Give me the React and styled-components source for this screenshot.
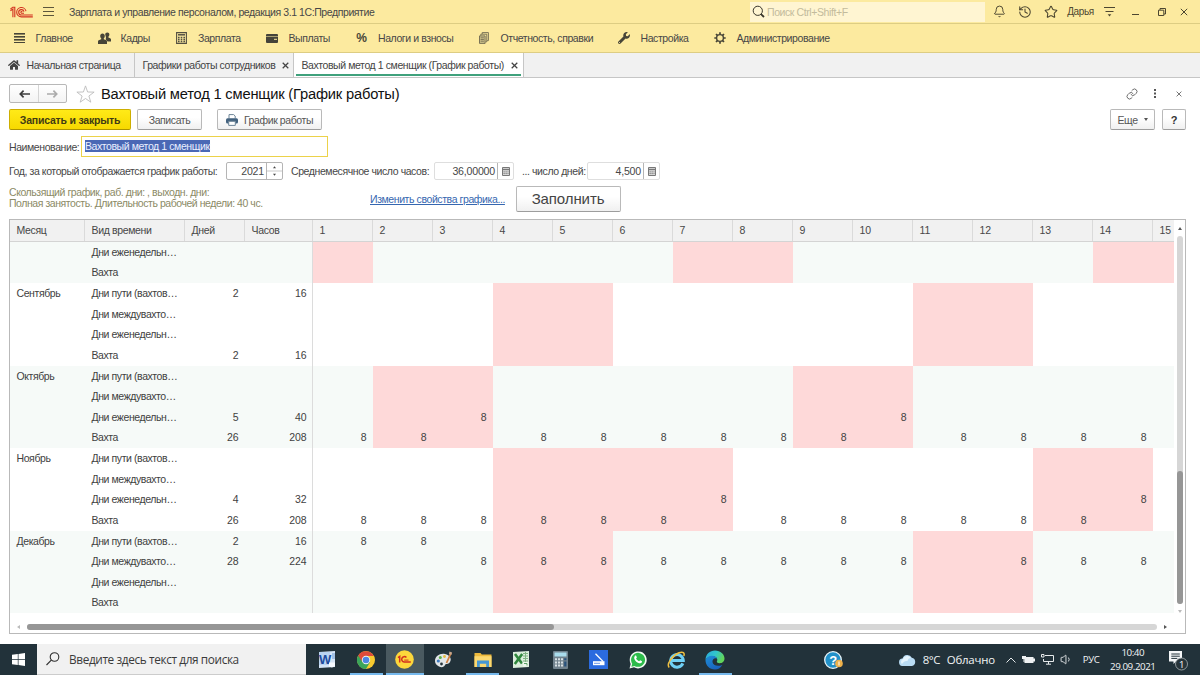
import React from 'react'
import styled, { createGlobalStyle, css } from 'styled-components'
import { Bell, History, Star, Link, Volume1 } from 'lucide-react'
import { FaHome, FaWrench } from 'react-icons/fa'

// themes
const Colors = {
  yellow: '#fcea9f',
  yellowLine: '#ddcd83',
  text: '#474747',
  grey: '#f1f1f1',
  line: '#b9b9b9',
  pink: '#fed9d9',
  stripe: '#f6faf8',
  red: '#d2311f',
  green: '#3fa17c',
  taskbar: '#22323a',
  hint: '#8b8a66'
}

const GlobalStyle = createGlobalStyle`
  * { box-sizing: border-box; }
  body {
    margin: 0;
    overflow: hidden;
    background: #fff;
    color: ${Colors.text};
    font: 10.5px/12px 'Liberation Sans', Arial, sans-serif;
    letter-spacing: -0.41px;
  }
  svg { display: block; flex: none; }
`

const Screen = styled.div`
  width: 1200px;
  height: 675px;
  display: flex;
  flex-direction: column;
`

// Title bar
const TitleBar = styled.header`
  height: 24px;
  display: flex;
  align-items: center;
  padding: 0 7px 0 10px;
  background: ${Colors.yellow};
  border-bottom: 1px solid ${Colors.yellowLine};
  flex: none;
`

const MenuButton = styled.div`
  margin-left: 10px;
`

const AppName = styled.span`
  margin-left: 15px;
  flex: 1;
  white-space: nowrap;
`

const SearchBox = styled.div`
  width: 235px;
  height: 20px;
  display: flex;
  align-items: center;
  gap: 2px;
  padding-left: 2px;
  background: #fff5d2;
  color: #c3bb9c;
`

const TitleTools = styled.div`
  width: 208px;
  display: grid;
  grid-template-columns: 26px 26px 26px 33px 25px 27px 25px 20px;
  align-items: center;
  justify-items: center;
  padding-left: 1px;
  color: #4c4630;
  font-size: 10px;
`

// Sections menu
const Sections = styled.nav`
  height: 29px;
  display: grid;
  grid-template-columns: 85px 77.5px 90.5px 89.5px 122.5px 140px 96px auto;
  align-items: center;
  padding-left: 12px;
  background: ${Colors.yellow};
  border-bottom: 1px solid ${Colors.yellowLine};
  flex: none;
`

const Section = styled.div`
  display: flex;
  align-items: center;
  gap: 9.5px;
  white-space: nowrap;
`

const SectionIcon = styled.span`
  width: 14px;
  display: flex;
  justify-content: center;
  color: #474537;
  font-size: 12px;
  font-weight: 700;
`

// Tabs
const Tabs = styled.div`
  height: 25px;
  display: flex;
  background: ${Colors.grey};
  border-bottom: 1px solid #c6c6c6;
  flex: none;
`

const Tab = styled.div`
  width: ${props => props.$width}px;
  display: flex;
  align-items: center;
  padding: 0 5px 0 7.5px;
  gap: 7px;
  border-right: 1px solid #c6c6c6;
  white-space: nowrap;
  color: #444;

  ${props => props.$active && css`
    background: linear-gradient(${Colors.green}, ${Colors.green}) 2px 21px / 225px 2px no-repeat #fff;
  `}
`

const TabText = styled.span`
  flex: 1;
`

// Form
const Form = styled.main`
  flex: 1;
  min-height: 0;
  display: flex;
  flex-direction: column;
  padding: 6px 14px 0 9px;
`

const FormHead = styled.div`
  height: 19px;
  display: flex;
  align-items: center;
`

const NavPair = styled.div`
  width: 58px;
  height: 19px;
  margin-right: 9px;
  display: grid;
  grid-template-columns: 1fr 1fr;
  border: 1px solid #b8b8b8;
  border-radius: 2px;
  background: linear-gradient(#fff, #f3f3f3);
`

const NavButton = styled.div`
  display: flex;
  align-items: center;
  justify-content: center;
  color: ${props => props.$disabled ? '#ababab' : '#3c3c3c'};

  & + & { border-left: 1px solid #d5d5d5; }
`

const FormTitle = styled.h1`
  margin: 0 0 0 6px;
  flex: 1;
  font-size: 14.7px;
  line-height: 16px;
  letter-spacing: -0.19px;
  font-weight: 400;
  color: #111;
`

const HeadTools = styled.div`
  display: grid;
  grid-template-columns: 23px 24px 23px;
  margin-right: -4px;
  justify-items: center;
  align-items: center;
  color: #666;
`

const Commands = styled.div`
  display: flex;
  align-items: center;
  height: 21px;
  margin-top: 6px;
`

const Button = styled.div`
  width: ${props => props.$width}px;
  height: 21px;
  margin-left: ${props => props.$gap || 0}px;
  display: flex;
  align-items: center;
  justify-content: center;
  gap: 6px;
  border: 1px solid #b9b9b9;
  border-bottom-color: #9d9d9d;
  border-radius: 2px;
  background: linear-gradient(#fff 40%, #f0f0f0);
  color: #555;

  ${props => props.$primary && css`
    border-color: #cdae00;
    border-bottom-color: #ae9400;
    background: linear-gradient(#ffea18, #f7d900);
    color: #413b14;
    font-weight: 700;
    letter-spacing: -0.2px;
  `}

  ${props => props.$large && css`
    height: 26px;
    font-size: 15px;
    letter-spacing: -0.1px;
    color: #444;
  `}
`

const Question = styled.b`
  font-size: 11px;
  color: #333;
`

const Spacer = styled.div`
  flex: 1;
`

const NameRow = styled.div`
  display: flex;
  align-items: center;
  height: 21px;
  margin-top: 6px;
`

const NameLabel = styled.label`
  width: 72px;
`

const NameInput = styled.div`
  width: 247px;
  height: 21px;
  padding: 3px;
  border: 1.5px solid #ecd24a;
  line-height: 12px;
`

const Selected = styled.span`
  display: inline-block;
  height: 12px;
  background: #4a68b5;
  color: #e9efff;
`

const YearRow = styled.div`
  display: flex;
  align-items: center;
  height: 18px;
  margin-top: 5px;
  white-space: nowrap;
`

const YearLabel = styled.label`
  width: ${props => props.$width}px;
`

const NumberInput = styled.div`
  width: ${props => props.$width}px;
  height: 18px;
  margin-right: 8px;
  display: grid;
  grid-template-columns: 1fr 16px;
  align-items: center;
  border: 1px solid ${props => props.$strong ? '#b5b5b5' : '#dedede'};
  border-radius: 2px;
  font-size: 10.6px;
  letter-spacing: -0.2px;
  text-align: right;
`

const NumberValue = styled.span`
  padding-right: 2px;
`

const InputAddon = styled.span`
  height: 16px;
  display: flex;
  align-items: center;
  justify-content: center;
  border-left: 1px solid #b5b5b5;
`

const InfoRow = styled.div`
  display: flex;
  align-items: center;
  height: 26px;
  margin-top: 6px;
`

const Hint = styled.p`
  width: 361px;
  margin: -2px 0 0;
  line-height: 11.5px;
  letter-spacing: -0.44px;
  color: ${Colors.hint};
  white-space: nowrap;
`

const PropsLink = styled.a`
  width: 145.5px;
  color: #3667b0;
  text-decoration: underline;
  white-space: nowrap;
`

// Schedule grid
const TableFrame = styled.section`
  width: 1177px;
  height: 415px;
  margin-top: 7px;
  display: grid;
  grid-template-columns: 1fr 11px;
  grid-template-rows: 393px 1fr;
  border: 1px solid ${Colors.line};
`

const TableBody = styled.div`
  overflow: hidden;
  display: flex;
  flex-direction: column;
`

const rowColumns = '75px 100px 60px 68px repeat(15, 60px)'

const HeadRow = styled.div`
  display: grid;
  grid-template-columns: ${rowColumns};
  height: 21.75px;
  flex: none;
  background: ${Colors.grey};
  border-bottom: 1px solid #d4d4d4;
  line-height: 20px;
`

const HeadCell = styled.div`
  padding-left: 6.5px;
  border-right: 1px solid #dadada;
  letter-spacing: ${props => props.$day ? '-0.1px' : '-0.35px'};
`

const MonthBlock = styled.div`
  flex: none;
  background: ${props => props.$striped ? Colors.stripe : '#fff'};
`

const Row = styled.div`
  display: grid;
  grid-template-columns: ${rowColumns};
  height: 20.625px;
  line-height: 20.6px;
  color: #414141;
`

const Cell = styled.div`
  padding-left: 6.5px;
  white-space: nowrap;
`

const NumCell = styled.div`
  padding-right: ${props => props.$edge ? 5.5 : 6.5}px;
  letter-spacing: -0.1px;
  text-align: right;
  background: ${props => props.$off ? Colors.pink : 'transparent'};
  border-right: ${props => props.$edge ? '1px solid #dcdcdc' : '0'};
`

const VScroll = styled.div`
  display: flex;
  flex-direction: column;
  align-items: center;
  justify-content: space-between;
  padding: 7px 0 0;
`

const VTrack = styled.div`
  width: 6px;
  height: 368px;
  display: flex;
  align-items: flex-end;
  border-radius: 3px;
  background: #d6d6d6;
`

const VThumb = styled.div`
  width: 6px;
  height: 133px;
  border-radius: 3px;
  background: #969696;
`

const HScroll = styled.div`
  display: flex;
  align-items: center;
  padding: 8px 0 0 7px;
  gap: 7px;
`

const HTrack = styled.div`
  width: 1130px;
  height: 6px;
  border-radius: 3px;
  background: #d6d6d6;
`

const HThumb = styled.div`
  width: 527px;
  height: 6px;
  border-radius: 3px;
  background: #969696;
`

const Arrow = styled.i`
  width: 0;
  height: 0;
  border: 2px solid transparent;
  ${props => props.$dir === 'up' && 'border-bottom: 3px solid #555; border-top: 0;'}
  ${props => props.$dir === 'down' && `border-top: 3px solid ${props.$dark ? '#555' : '#bbb'}; border-bottom: 0;`}
  ${props => props.$dir === 'left' && 'border-right: 3px solid #bbb; border-left: 0;'}
  ${props => props.$dir === 'right' && 'border-left: 3px solid #555; border-right: 0;'}
`

// Taskbar
const Taskbar = styled.footer`
  height: 31px;
  flex: none;
  display: flex;
  background: ${Colors.taskbar};
  color: #f2f5f6;
  font-family: 'Open Sans', 'Noto Sans', sans-serif;
  letter-spacing: 0;
`

const StartButton = styled.div`
  width: 37px;
  display: flex;
  align-items: center;
  justify-content: center;
`

const TaskSearch = styled.div`
  width: 269px;
  display: flex;
  align-items: center;
  padding-left: 9px;
  gap: 9px;
  background: #f1f1f1;
  border-bottom: 1px solid #ccc;
  color: #3a3a3a;
  font-size: 11.8px;
  letter-spacing: -0.38px;
  white-space: nowrap;
`

const TaskApps = styled.div`
  display: grid;
  grid-template-columns: repeat(11, 38.8px);
  padding-left: 2px;
`

const TaskApp = styled.div`
  display: flex;
  align-items: center;
  justify-content: center;
  background: ${props => props.$active ? '#4a5a60' : 'transparent'};
  box-shadow: ${props => props.$open ? 'inset 0 -2px 0 #76b9ed' : 'none'};
  margin: ${props => props.$active ? '0' : '0 3px'};
`

const Tray = styled.div`
  flex: 1;
  display: flex;
  align-items: center;
  white-space: nowrap;
`

const HelpSlot = styled.div`
  margin-left: 89px;
  width: 75px;
`

const Weather = styled.div`
  width: 107px;
  display: flex;
  align-items: center;
  font-size: 11.4px;
  letter-spacing: -0.2px;
`

const Degrees = styled.span`
  width: 24px;
  margin-left: 7px;
  letter-spacing: -0.5px;
`

const TrayIcons = styled.div`
  display: flex;
  align-items: center;
  gap: 6px;
`

const Lang = styled.span`
  width: 27px;
  margin-left: 10px;
  font-size: 9.6px;
  letter-spacing: -0.3px;
`

const Clock = styled.div`
  width: 46px;
  font-size: 9.8px;
  line-height: 14px;
  letter-spacing: -0.45px;
  text-align: center;
`

const Notices = styled.div`
  flex: 1;
  display: flex;
  padding: 2px 0 0 13px;
`

// icons
const Logo = () => (
  <svg width='23' height='12' viewBox='0 0 23 12' fill='none' stroke={Colors.red} strokeWidth='1.1'>
    <path d='M.4 3.200L2.800 1.200h2v10M.4 4.700L2.900 3.100v8.100' />
    <path d='M16 5.200A4.700 4.700 0 1 0 11.500 10.900H22.800' />
    <path d='M14 5.600A2.700 2.700 0 1 0 11.500 9H22.800' />
    <path d='M12.400 5.700A.9.900 0 1 0 11.500 7.200H14' />
  </svg>
)

const Lines = ({ width = 11, thick = 1, step = 4, count = 3, color = '#5d563b' }) => (
  <svg width={width} height={(count - 1) * step + thick}>
    {Array.from({ length: count }, (_, i) => (
      <rect key={i} y={i * step} width={width} height={thick} fill={color} />
    ))}
  </svg>
)

const PeopleIcon = () => (
  <svg width='13' height='12' viewBox='0 0 13 12' fill='#474537'>
    <path d='M9.300.4c1.300 0 2.100.9 2.100 2.200 0 1-.4 1.700-1 2.200v.8l2.100.9c.4.200.5.500.5 1v1.900H9.600L7.700 7.500 8 5.400 7.200 2.600C7.200 1.200 8 .4 9.300.4z' />
    <path d='M4.500 1.400c1.400 0 2.300 1 2.300 2.500 0 1.100-.4 1.900-1 2.400v.9l2.500 1c.5.200.7.600.7 1.200V12H0V9.400c0-.6.2-1 .7-1.200l2.500-1v-.9c-.6-.5-1-1.300-1-2.400 0-1.500.9-2.500 2.300-2.500z' />
  </svg>
)

const Magnifier = () => (
  <svg width='13' height='13' viewBox='0 0 13 13' fill='none' stroke='#37342a'>
    <circle cx='5.800' cy='5.800' r='4.600' />
    <path d='M9 9.200l3 2.800' strokeWidth='1.800' />
  </svg>
)

const Cross = ({ size = 7, width = 1.4, color = '#444' }) => (
  <svg width={size} height={size} viewBox='0 0 8 8' stroke={color} strokeWidth={width}>
    <path d='M.8.8l6.400 6.400M7.200.8L.8 7.200' />
  </svg>
)

const CalcIcon = () => (
  <svg width='11' height='12' viewBox='0 0 11 12' fill='none' stroke='#545042'>
    <path d='M.6.6h9.800v10.800H.6z' strokeWidth='1.100' />
    <path d='M2 2.800h7' strokeWidth='1.500' />
    <path d='M2 5.500h7M2 7.500h7M2 9.500h7' strokeDasharray='1.600 1.100' strokeWidth='1.300' />
  </svg>
)

const MiniCalc = () => (
  <svg width='8' height='9' viewBox='0 0 8 9' fill='#e6e6e6' stroke='#777'>
    <path d='M.5.5h7v8h-7z' />
    <path d='M1 2.500h6' strokeWidth='1.500' />
    <path d='M1.500 4.800h5M1.500 6.700h5' strokeDasharray='1.200 .8' strokeWidth='1.300' />
  </svg>
)

const CardIcon = () => (
  <svg width='12' height='9' viewBox='0 0 12 9'>
    <rect width='12' height='9' rx='1' fill='#45433a' />
    <rect y='2' width='12' height='1' fill='#a99f72' />
    <rect x='8' y='4.800' width='3' height='1' fill={Colors.yellow} />
  </svg>
)

const ReportIcon = () => (
  <svg width='10' height='12' viewBox='0 0 10 12' fill='none' stroke='#6d684f'>
    <path d='M3.200 2V.6h6.200v8H8.200' strokeWidth='.9' />
    <path d='M1.800 3.700V2.200h6v7.600H6.500' strokeWidth='.9' />
    <path d='M.5 3.900h5.600v7.500H.5z' fill='#cdc18a' strokeWidth='.9' />
    <path d='M1.600 5.800h3.300M1.600 7.500h3.300M1.600 9.200h3.300' strokeWidth='.8' />
  </svg>
)

const GearIcon = () => (
  <svg width='12' height='12' viewBox='0 0 12 12' fill='none' stroke='#474537'>
    <circle cx='6' cy='6' r='3.400' strokeWidth='1.400' />
    <path d='M6 .3v2M6 9.700v2M.3 6h2M9.700 6h2M2 2l1.400 1.400M8.600 8.600L10 10M2 10l1.400-1.400M8.600 3.400L10 2' strokeWidth='1.700' />
  </svg>
)

const ArrowIcon = ({ back }) => (
  <svg width='11' height='8' viewBox='0 0 11 8' fill='none' stroke='currentColor' strokeWidth='1.700'>
    <path d={back ? 'M11 4H1.5M4.6.7L1.3 4l3.3 3.3' : 'M0 4h9.5M6.4.7L9.7 4 6.4 7.3'} />
  </svg>
)

const BigStar = () => (
  <svg width='19' height='18' viewBox='0 0 19 18' fill='#fff' stroke='#bcbcbc' strokeWidth='.9'>
    <path d='M9.500.9l2.100 6.100 6.500.1-5.200 3.900 1.900 6.200-5.300-3.700-5.300 3.700L6.100 11 .9 7.100l6.500-.1z' />
  </svg>
)

const PrinterIcon = () => (
  <svg width='12' height='12' viewBox='0 0 12 12'>
    <path d='M3 4.500V.6h4.600L9.200 2v2.500' fill='#fff' stroke='#6d8598' />
    <rect y='4.200' width='12' height='5.300' rx='1.500' fill='#43627f' />
    <path d='M2.700 7.300h6.600v4.100H2.700z' fill='#fff' stroke='#6d8598' />
  </svg>
)

const WordIcon = () => (
  <svg width='18' height='17' viewBox='0 0 18 17'>
    <path d='M1 1l16-1v16l-16 1z' fill='#d6e5f7' />
    <path d='M1 1h11v13H1z' fill='#b9d3f1' />
    <path d='M14 3h3M14 5h3M14 7h3' stroke='#6f9ad2' />
    <text x='1' y='12.500' fontSize='13' fontWeight='700' fontFamily='Liberation Sans' fill='#1d4c9f'>W</text>
    <path d='M11 11.500h6v3.500l-3 1.500-3-1z' fill='#f6faff' />
  </svg>
)

const ChromeIcon = () => (
  <svg width='18' height='18' viewBox='0 0 18 18'>
    <circle cx='9' cy='9' r='9' fill='#f7ca2f' />
    <path d='M9 9L1.200 4.500A9 9 0 0 0 9 18l4-6.800z' fill='#3ba55a' />
    <path d='M1.200 4.500L5.400 11 9 5h7.800A9 9 0 0 0 1.200 4.500z' fill='#dd4b3c' />
    <circle cx='9' cy='9' r='4.200' fill='#f4f4ef' />
    <circle cx='9' cy='9' r='3.300' fill='#4c86e4' />
  </svg>
)

const OneCIcon = () => (
  <svg width='19' height='19' viewBox='0 0 19 19'>
    <circle cx='9.500' cy='9.500' r='9.300' fill='#fdd73b' />
    <g fill='none' stroke={Colors.red} strokeWidth='1.500'>
      <path d='M3 7.600l1.700-1.200v6.100' />
      <path d='M11.400 7.500A2.700 2.700 0 1 0 9.200 12h6.600' />
      <path d='M9.200 10.100h4.300' strokeWidth='1' />
    </g>
  </svg>
)

const PaletteIcon = () => (
  <svg width='19' height='17' viewBox='0 0 19 17'>
    <path d='M1 10C1 5 6 2 11 3s7 5 5 8-4 1-5 3-3 3-6 1.500S1 12 1 10z' fill='#e2e6e8' />
    <circle cx='4.300' cy='10' r='1.600' fill='#417cc0' />
    <circle cx='6.300' cy='6.500' r='1.500' fill='#5bae4a' />
    <circle cx='10.500' cy='5.500' r='1.400' fill='#e6b93d' />
    <circle cx='7.500' cy='13' r='1.400' fill='#26343b' />
    <path d='M17 2l-4.500 10' stroke='#ce7f3e' strokeWidth='1.800' />
    <path d='M15.500.5l2.600 1-.8 2.500-2.400-1z' fill='#c6a48b' />
  </svg>
)

const FolderIcon = () => (
  <svg width='18' height='16' viewBox='0 0 18 16'>
    <path d='M.5 1h6l1.300 1.600h9.700V15H.5z' fill='#edb93c' />
    <path d='M.5 4.200h17V15H.5z' fill='#fbd870' />
    <path d='M3 15V8.500h12V15h-2.800v-3.200H5.800V15z' fill='#4798d3' />
  </svg>
)

const ExcelIcon = () => (
  <svg width='18' height='17' viewBox='0 0 18 17'>
    <path d='M1 1l16-1v16l-16 1z' fill='#dceedd' />
    <path d='M11 2.500h5M11 5h5M11 7.500h5M11 10h5M13.500 1v11' stroke='#80b483' />
    <path d='M3 3l7 9.500M10.200 3L2.800 13' stroke='#2f873d' strokeWidth='2.600' />
    <path d='M10.500 11h6v4l-5 1z' fill='#eef8ed' />
    <path d='M12 12.500h3v2' stroke='#5ca168' fill='none' />
  </svg>
)

const CalculatorIcon = () => (
  <svg width='15' height='18' viewBox='0 0 15 18'>
    <rect width='15' height='18' rx='1' fill='#71828d' />
    <rect x='1.500' y='1.500' width='12' height='4' fill='#a9dcec' />
    <path d='M2 8.200h8M2 11.400h8M2 14.600h8' stroke='#d8e0e4' strokeWidth='2' strokeDasharray='2 1' />
    <path d='M12.300 7.200v2M12.300 10.400v5.200' stroke='#28527c' strokeWidth='2.200' />
  </svg>
)

const ScannerIcon = () => (
  <svg width='19' height='19' viewBox='0 0 19 19'>
    <rect width='19' height='19' fill='#2b6bdf' />
    <path d='M6.500 3.700l7.500 7.700' stroke='#fff' strokeWidth='1.300' />
    <path d='M4 11.200h11.500v4H4z' fill='#fff' />
    <path d='M5 13.300h6' stroke='#2b6bdf' strokeWidth='.7' />
  </svg>
)

const WhatsIcon = () => (
  <svg width='18' height='18' viewBox='0 0 18 18'>
    <path d='M.5 17.500l1.200-4.600A8.500 8.500 0 1 1 5 16.300z' fill='#f5fbf5' />
    <path d='M2.400 15.700l.8-3a7 7 0 1 1 2.300 2.200z' fill='#2dbb4b' />
    <path d='M5.900 4.800c.5-.5 1.200-.5 1.400.1l.6 1.500-.8 1.200c.7 1.300 1.600 2.100 3 2.700l1.100-1 1.800.9c.3.800-.5 2-1.800 2.100C8.300 12.200 5 9 5.200 6.400z' fill='#fff' />
  </svg>
)

const EdgeIcon = () => (
  <svg width='20' height='20' viewBox='0 0 20 20'>
    <defs>
      <linearGradient id='edgeTop' x1='0' y1='0' x2='1' y2='.4'>
        <stop offset='0' stopColor='#2ba6de' />
        <stop offset='.55' stopColor='#31c6cb' />
        <stop offset='1' stopColor='#62d55a' />
      </linearGradient>
      <linearGradient id='edgeLow' x1='0' y1='0' x2='.6' y2='1'>
        <stop offset='0' stopColor='#1e8fd8' />
        <stop offset='1' stopColor='#1a63bd' />
      </linearGradient>
    </defs>
    <path d='M.5 10C.5 4 5 .5 10 .5c5.500 0 9.500 3.800 9.500 8 0 3-2.300 4.700-4.700 4.700-2.500 0-3.600-1-2.700-2.200C13 8.500 11 6.500 8 6.500 4 6.500 1.500 8 .5 10z' fill='url(#edgeTop)' />
    <path d='M.5 10c.8-2.300 3.200-4.300 6.500-4.300 2.800 0 4.700 1.400 5.200 3-2.500-1.200-5 .6-4.700 3.300.3 3 4.500 5 9.800 2.900C15.500 18 13 19.500 10 19.500c-5.500 0-9.500-4-9.500-9.500z' fill='url(#edgeLow)' />
  </svg>
)

const ExplorerIcon = () => (
  <svg width='19' height='18' viewBox='0 0 19 18' fill='none'>
    <path d='M15.800 12.300A6.300 6.300 0 1 1 16.300 9.600H5' stroke='#6fd0f5' strokeWidth='3' />
    <path d='M2.200 16.500C-1 13 5.500 4.500 12 1.800c4-1.600 6 .2 4.800 3.200' stroke='#f1c040' strokeWidth='1.500' />
  </svg>
)

const HelpIcon = () => (
  <svg width='19' height='18' viewBox='0 0 19 18'>
    <circle cx='9' cy='9' r='8.300' fill='#2291c9' stroke='#e9f5fa' strokeWidth='1.300' />
    <text x='5.200' y='13.500' fontSize='13' fontWeight='700' fontFamily='Liberation Sans' fill='#fff'>?</text>
    <circle cx='15' cy='12.500' r='3.800' fill='#efb14a' />
    <path d='M15 10.500v4' stroke='#fff' />
  </svg>
)

const CloudIcon = () => (
  <svg width='17' height='12' viewBox='0 0 17 12'>
    <path d='M4 12A3.700 3.700 0 0 1 3.500 4.600 5 5 0 0 1 12.800 3.800 4.200 4.200 0 0 1 13 12z' fill='#b9dcf4' />
    <path d='M3 10A3 3 0 0 1 4 5a4.500 4.500 0 0 1 8-1c-2 0-3 1-3.500 3C6 6.500 4 8 3 10z' fill='#e5f4fd' />
  </svg>
)

const NoticeIcon = () => (
  <svg width='19' height='20' viewBox='0 0 19 20'>
    <path d='M0 0h13v10.500H7L4.500 13v-2.500H0z' fill='#f4f6f7' />
    <path d='M2.300 3h8.500M2.300 5.200h8.500M2.300 7.400h6' stroke='#22323a' />
    <circle cx='12.500' cy='13' r='6' fill='#27343a' stroke='#a9b1b4' strokeWidth='.8' />
    <text x='10' y='16.500' fontSize='9.500' fontFamily='Open Sans' fill='#fff'>1</text>
  </svg>
)

// data
const sections = [
  { text: 'Главное', icon: <Lines width={11} thick={1.6} step={3} count={4} color='#474537' /> },
  { text: 'Кадры', icon: <PeopleIcon /> },
  { text: 'Зарплата', icon: <CalcIcon /> },
  { text: 'Выплаты', icon: <CardIcon /> },
  { text: 'Налоги и взносы', icon: '%' },
  { text: 'Отчетность, справки', icon: <ReportIcon /> },
  { text: 'Настройка', icon: <FaWrench size={12} /> },
  { text: 'Администрирование', icon: <GearIcon /> }
]

const kinds = ['Дни пути (вахтов…', 'Дни междувахто…', 'Дни еженедельн…', 'Вахта']
const range = (from, to) => Array.from({ length: to - from + 1 }, (_, i) => from + i)

const months = [
  {
    name: '',
    off: [1, 7, 8, 14, 15],
    striped: true,
    rows: [{ kind: kinds[2] }, { kind: kinds[3] }]
  },
  {
    name: 'Сентябрь',
    off: [4, 5, 11, 12],
    rows: [
      { kind: kinds[0], days: 2, hours: 16 },
      { kind: kinds[1] },
      { kind: kinds[2] },
      { kind: kinds[3], days: 2, hours: 16 }
    ]
  },
  {
    name: 'Октябрь',
    off: [2, 3, 9, 10],
    striped: true,
    rows: [
      { kind: kinds[0] },
      { kind: kinds[1] },
      { kind: kinds[2], days: 5, hours: 40, work: [3, 10] },
      { kind: kinds[3], days: 26, hours: 208, work: [1, 2, ...range(4, 9), ...range(11, 14)] }
    ]
  },
  {
    name: 'Ноябрь',
    off: [4, 5, 6, 7, 13, 14],
    rows: [
      { kind: kinds[0] },
      { kind: kinds[1] },
      { kind: kinds[2], days: 4, hours: 32, work: [7, 14] },
      { kind: kinds[3], days: 26, hours: 208, work: [...range(1, 6), ...range(8, 13)] }
    ]
  },
  {
    name: 'Декабрь',
    off: [4, 5, 11, 12],
    striped: true,
    rows: [
      { kind: kinds[0], days: 2, hours: 16, work: [1, 2] },
      { kind: kinds[1], days: 28, hours: 224, work: [...range(3, 10), ...range(12, 14)] },
      { kind: kinds[2] },
      { kind: kinds[3] }
    ]
  }
]

const days = range(1, 15)

const taskApps = [
  { id: 'word', icon: <WordIcon /> },
  { id: 'chrome', icon: <ChromeIcon />, open: true },
  { id: 'onec', icon: <OneCIcon />, open: true, active: true },
  { id: 'paint', icon: <PaletteIcon /> },
  { id: 'files', icon: <FolderIcon />, open: true },
  { id: 'excel', icon: <ExcelIcon /> },
  { id: 'calc', icon: <CalculatorIcon /> },
  { id: 'scan', icon: <ScannerIcon /> },
  { id: 'whatsapp', icon: <WhatsIcon /> },
  { id: 'ie', icon: <ExplorerIcon /> },
  { id: 'edge', icon: <EdgeIcon />, open: true }
]

const Header = () => (
  <React.Fragment>
    <TitleBar>
      <Logo />
      <MenuButton><Lines /></MenuButton>
      <AppName>Зарплата и управление персоналом, редакция 3.1 1С:Предприятие</AppName>
      <SearchBox>
        <Magnifier />
        Поиск Ctrl+Shift+F
      </SearchBox>
      <TitleTools>
        <Bell size={13} strokeWidth={1.8} />
        <History size={14} strokeWidth={1.8} />
        <Star size={14} strokeWidth={1.8} />
        <span>Дарья</span>
        <svg width='11' height='11' viewBox='0 0 11 11' stroke='#4c4630'>
          <path d='M0 1.500h11M1.500 5.500h8' />
          <path d='M3.700 8.200h3.600L5.500 10.500z' fill='#4c4630' stroke='none' />
        </svg>
        <svg width='7' height='8' stroke='#4c4630'><path d='M0 6.500h7' /></svg>
        <svg width='8' height='8' viewBox='0 0 8 8' fill='none' stroke='#4c4630'>
          <path d='M.5 2.200h5.300v5.300H.5zM2 2V.5h5.500V6H6' />
        </svg>
        <Cross size={8} width={1} color='#4c4630' />
      </TitleTools>
    </TitleBar>

    <Sections>
      {sections.map(item => (
        <Section key={item.text}>
          <SectionIcon>{item.icon}</SectionIcon>
          {item.text}
        </Section>
      ))}
    </Sections>

    <Tabs>
      <Tab $width={135}>
        <FaHome size={12} />
        <TabText>Начальная страница</TabText>
      </Tab>
      <Tab $width={159}>
        <TabText>Графики работы сотрудников</TabText>
        <Cross />
      </Tab>
      <Tab $width={230} $active>
        <TabText>Вахтовый метод 1 сменщик (График работы)</TabText>
        <Cross />
      </Tab>
    </Tabs>
  </React.Fragment>
)

const Schedule = () => (
  <TableFrame>
    <TableBody>
      <HeadRow>
        <HeadCell>Месяц</HeadCell>
        <HeadCell>Вид времени</HeadCell>
        <HeadCell>Дней</HeadCell>
        <HeadCell>Часов</HeadCell>
        {days.map(day => <HeadCell key={day} $day>{day}</HeadCell>)}
      </HeadRow>
      {months.map(month => (
        <MonthBlock key={month.name} $striped={month.striped}>
          {month.rows.map((row, index) => (
            <Row key={row.kind}>
              <Cell>{index === 0 ? month.name : ''}</Cell>
              <Cell>{row.kind}</Cell>
              <NumCell>{row.days}</NumCell>
              <NumCell $edge>{row.hours}</NumCell>
              {days.map(day => (
                <NumCell key={day} $off={month.off.includes(day)}>
                  {row.work && row.work.includes(day) ? 8 : ''}
                </NumCell>
              ))}
            </Row>
          ))}
        </MonthBlock>
      ))}
    </TableBody>
    <VScroll>
      <Arrow $dir='up' />
      <VTrack><VThumb /></VTrack>
      <Arrow $dir='down' />
    </VScroll>
    <HScroll>
      <Arrow $dir='left' />
      <HTrack><HThumb /></HTrack>
      <Arrow $dir='right' />
    </HScroll>
  </TableFrame>
)

const App = () => (
  <Screen>
    <GlobalStyle />
    <Header />

    <Form>
      <FormHead>
        <NavPair>
          <NavButton><ArrowIcon back /></NavButton>
          <NavButton $disabled><ArrowIcon /></NavButton>
        </NavPair>
        <BigStar />
        <FormTitle>Вахтовый метод 1 сменщик (График работы)</FormTitle>
        <HeadTools>
          <Link size={12} strokeWidth={1.9} />
          <svg width='3' height='9' fill='#555'>
            <rect width='2' height='2' /><rect y='3.500' width='2' height='2' /><rect y='7' width='2' height='2' />
          </svg>
          <Cross size={6} width={1.2} color='#666' />
        </HeadTools>
      </FormHead>

      <Commands>
        <Button $width={122} $primary>Записать и закрыть</Button>
        <Button $width={65} $gap={6}>Записать</Button>
        <Button $width={105} $gap={15}>
          <PrinterIcon />
          График работы
        </Button>
        <Spacer />
        <Button $width={45}>
          Еще
          <Arrow $dir='down' $dark />
        </Button>
        <Button $width={24} $gap={7}><Question>?</Question></Button>
      </Commands>

      <NameRow>
        <NameLabel>Наименование:</NameLabel>
        <NameInput><Selected>Вахтовый метод 1 сменщик</Selected></NameInput>
      </NameRow>

      <YearRow>
        <YearLabel $width={217}>Год, за который отображается график работы:</YearLabel>
        <NumberInput $width={57} $strong>
          <NumberValue>2021</NumberValue>
          <InputAddon>
            <svg width='15' height='16' viewBox='0 0 15 16' fill='#444'>
              <path d='M6 5.200L7.500 3.200 9 5.200zM6 10.800L7.500 12.800 9 10.800z' />
              <path d='M0 8h15' stroke='#c9c9c9' />
            </svg>
          </InputAddon>
        </NumberInput>
        <YearLabel $width={143}>Среднемесячное число часов:</YearLabel>
        <NumberInput $width={80}>
          <NumberValue>36,00000</NumberValue>
          <InputAddon><MiniCalc /></InputAddon>
        </NumberInput>
        <YearLabel $width={65}>... число дней:</YearLabel>
        <NumberInput $width={73}>
          <NumberValue>4,500</NumberValue>
          <InputAddon><MiniCalc /></InputAddon>
        </NumberInput>
      </YearRow>

      <InfoRow>
        <Hint>
          Скользящий график, раб. дни: , выходн. дни:<br />
          Полная занятость. Длительность рабочей недели: 40 чс.
        </Hint>
        <PropsLink>Изменить свойства графика...</PropsLink>
        <Button $width={105} $large>Заполнить</Button>
      </InfoRow>

      <Schedule />
    </Form>

    <Taskbar>
      <StartButton>
        <svg width='13' height='13' viewBox='0 0 13 13' fill='#fff'>
          <path d='M0 1.800L5.800 1v5.200H0zM6.500.9L13 0v6.200H6.500zM0 6.900h5.800v5.200L0 11.300zM6.500 6.900H13V13l-6.500-.9z' />
        </svg>
      </StartButton>
      <TaskSearch>
        <svg width='14' height='14' viewBox='0 0 14 14' fill='none' stroke='#2f2f2f' strokeWidth='1.100'>
          <circle cx='8.500' cy='5' r='4.300' />
          <path d='M5.300 8.100L.5 13' />
        </svg>
        Введите здесь текст для поиска
      </TaskSearch>
      <TaskApps>
        {taskApps.map(app => (
          <TaskApp key={app.id} $open={app.open} $active={app.active}>{app.icon}</TaskApp>
        ))}
      </TaskApps>
      <Tray>
        <HelpSlot><HelpIcon /></HelpSlot>
        <Weather>
          <CloudIcon />
          <Degrees>8°C</Degrees>
          Облачно
        </Weather>
        <TrayIcons>
          <svg width='10' height='6' viewBox='0 0 10 6' fill='none' stroke='#e6eaeb'><path d='M.5 5.500L5 1l4.500 4.500' /></svg>
          <svg width='13' height='9' viewBox='0 0 13 9' fill='#eef1f2'>
            <path d='M2.500 2h9v1.500H13v3h-1.500V8h-9z' /><path d='M0 1h4v3H0zM1.500 4h1v3h-1z' />
          </svg>
          <svg width='13' height='11' viewBox='0 0 13 11' fill='none' stroke='#e6eaeb'>
            <path d='M4 1.500h8.500v6H2.500V5M7.500 7.500v2.500M5 10.200h5M.5.5h2.500v2.500H.5z' />
          </svg>
          <Volume1 size={13} strokeWidth={1.6} />
        </TrayIcons>
        <Lang>РУС</Lang>
        <Clock>10:40<br />29.09.2021</Clock>
        <Notices><NoticeIcon /></Notices>
      </Tray>
    </Taskbar>
  </Screen>
)

export default App
